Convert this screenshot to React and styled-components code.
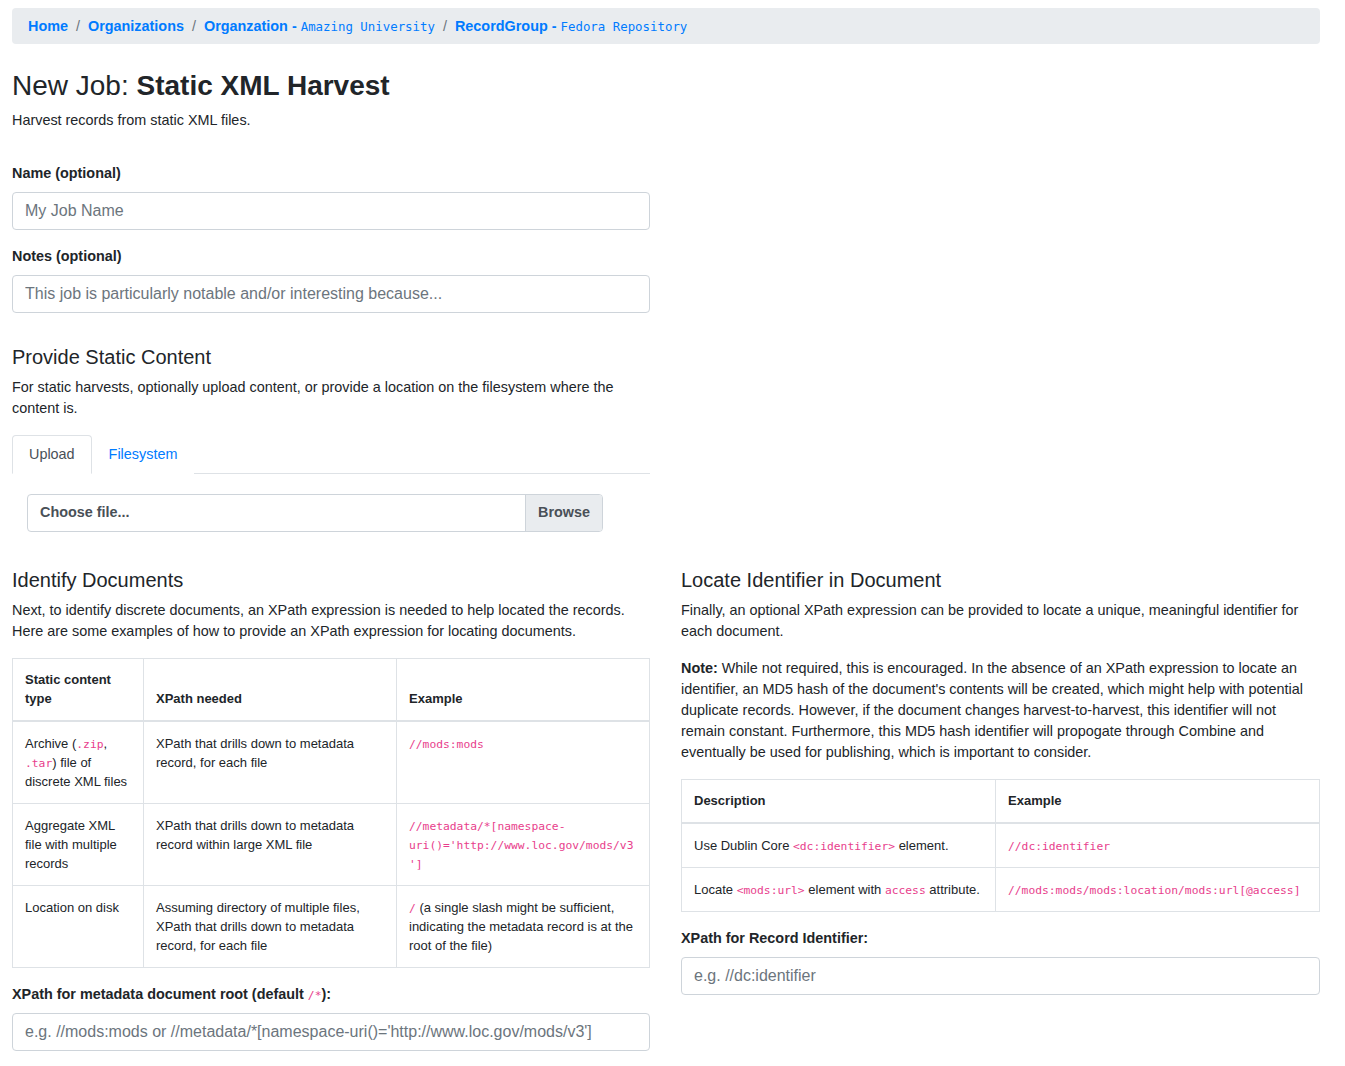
import React from 'react';
import styled, { createGlobalStyle } from 'styled-components';

const blue = '#007bff';
const pink = '#e83e8c';
const border = '#dee2e6';
const inputBorder = '#ced4da';
const muted = '#6c757d';

const GlobalStyle = createGlobalStyle`
    body {
        margin: 0;
        font-family: 'Liberation Sans', Helvetica, Arial, sans-serif;
        font-size: 14.4px;
        line-height: 21px;
        color: #212529;
        background: #fff;
    }
    * { box-sizing: border-box; }
`;

const Page = styled.div`
    padding: 8px 25px 24px 12px;
`;

const Crumbs = styled.ol`
    display: flex;
    align-items: center;
    list-style: none;
    margin: 0 0 25px;
    padding: 7.5px 16px;
    background: #e9ecef;
    border-radius: 4px;
    line-height: 21px;
`;

const Crumb = styled.li`
    display: flex;
    align-items: baseline;

    & + &::before {
        content: '/';
        color: ${muted};
        padding: 0 8px;
    }

    a {
        color: ${blue};
        font-weight: 700;
        text-decoration: none;
    }

    code {
        font-family: 'DejaVu Sans Mono', 'Liberation Mono', monospace;
        font-size: 12.4px;
        font-weight: 400;
        color: ${blue};
    }
`;

const Title = styled.h3`
    margin: 0 0 7px;
    font-size: 28px;
    font-weight: 400;
    line-height: 1.2;

    b { font-weight: 700; }
`;

const Lead = styled.p`
    margin: 0 0 ${p => p.$gap || 16}px;
`;

const Top = styled.section`
    width: 638px;
`;

const Group = styled.div`
    margin-bottom: 16px;
`;

const Label = styled.label`
    display: block;
    font-weight: 700;
    margin-bottom: 8px;
`;

const Input = styled.input`
    display: block;
    width: 100%;
    height: 38px;
    padding: 6px 12px;
    font-family: inherit;
    font-size: 16px;
    color: #495057;
    border: 1px solid ${inputBorder};
    border-radius: 4px;
    background: #fff;

    &::placeholder { color: ${muted}; }
`;

const Heading = styled.h4`
    margin: ${p => p.$top || 0}px 0 8px;
    font-size: 20px;
    font-weight: 400;
    line-height: 1.2;
`;

const Tabs = styled.ul`
    display: flex;
    list-style: none;
    margin: 0;
    padding: 0;
    border-bottom: 1px solid ${border};
`;

const Tab = styled.li`
    margin-bottom: -1px;
    padding: 8px 16px;
    border: 1px solid ${p => (p.$active ? border : 'transparent')};
    border-bottom-color: ${p => (p.$active ? '#fff' : 'transparent')};
    border-radius: 4px 4px 0 0;
    background: #fff;
    color: ${p => (p.$active ? '#495057' : blue)};
`;

const TabPane = styled.div`
    padding: 20px 15px 0;
`;

const FileBox = styled.div`
    display: flex;
    width: 576px;
    height: 38px;
    border: 1px solid ${inputBorder};
    border-radius: 4px;
    overflow: hidden;
    font-weight: 700;
    color: #495057;
`;

const FileName = styled.div`
    flex: 1;
    padding: 7px 12px;
`;

const FileButton = styled.div`
    padding: 7px 12px;
    background: #e9ecef;
    border-left: 1px solid ${inputBorder};
`;

const Columns = styled.div`
    display: grid;
    grid-template-columns: 638px 639px;
    column-gap: 31px;
    margin-top: 36px;
`;

const Code = styled.code`
    font-family: 'DejaVu Sans Mono', 'Liberation Mono', monospace;
    font-size: 11.3px;
    line-height: 1;
    font-weight: 400;
    color: ${pink};
    word-break: break-word;
`;

const Table = styled.table`
    width: 100%;
    margin-bottom: 16px;
    border-collapse: collapse;
    table-layout: fixed;
    font-size: 13px;
    line-height: 19px;

    th, td {
        padding: 12px;
        border: 1px solid ${border};
        text-align: left;
        vertical-align: top;
    }

    thead th {
        padding: 11.5px 12px;
        vertical-align: bottom;
        border-bottom-width: 2px;
        font-weight: 700;
    }
`;

const docRows = [
    {
        type: <>Archive (<Code>.zip</Code>, <Code>.tar</Code>) file of discrete XML files</>,
        xpath: 'XPath that drills down to metadata record, for each file',
        example: <Code>//mods:mods</Code>,
    },
    {
        type: 'Aggregate XML file with multiple records',
        xpath: 'XPath that drills down to metadata record within large XML file',
        example: <Code>//metadata/*[namespace-uri()='http://www.loc.gov/mods/v3']</Code>,
    },
    {
        type: 'Location on disk',
        xpath: 'Assuming directory of multiple files, XPath that drills down to metadata record, for each file',
        example: <><Code>/</Code> (a single slash might be sufficient, indicating the metadata record is at the root of the file)</>,
    },
];

const idRows = [
    {
        desc: <>Use Dublin Core <Code>&lt;dc:identifier&gt;</Code> element.</>,
        example: <Code>//dc:identifier</Code>,
    },
    {
        desc: <>Locate <Code>&lt;mods:url&gt;</Code> element with <Code>access</Code> attribute.</>,
        example: <Code>//mods:mods/mods:location/mods:url[@access]</Code>,
    },
];

const App = () => {
    return (
        <Page>
            <GlobalStyle />
            <nav>
                <Crumbs>
                    <Crumb><a href="#home">Home</a></Crumb>
                    <Crumb><a href="#orgs">Organizations</a></Crumb>
                    <Crumb><a href="#org">Organzation -&nbsp;<code>Amazing University</code></a></Crumb>
                    <Crumb><a href="#rg">RecordGroup -&nbsp;<code>Fedora Repository</code></a></Crumb>
                </Crumbs>
            </nav>

            <Top>
                <Title>New Job: <b>Static XML Harvest</b></Title>
                <Lead $gap={32}>Harvest records from static XML files.</Lead>

                <Group>
                    <Label>Name (optional)</Label>
                    <Input type="text" placeholder="My Job Name" />
                </Group>
                <Group>
                    <Label>Notes (optional)</Label>
                    <Input type="text" placeholder="This job is particularly notable and/or interesting because..." />
                </Group>

                <Heading $top={32}>Provide Static Content</Heading>
                <Lead>For static harvests, optionally upload content, or provide a location on the filesystem where the content is.</Lead>

                <Tabs>
                    <Tab $active>Upload</Tab>
                    <Tab>Filesystem</Tab>
                </Tabs>
                <TabPane>
                    <FileBox>
                        <FileName>Choose file...</FileName>
                        <FileButton>Browse</FileButton>
                    </FileBox>
                </TabPane>
            </Top>

            <Columns>
                <div>
                    <Heading>Identify Documents</Heading>
                    <Lead>Next, to identify discrete documents, an XPath expression is needed to help located the records. Here are some examples of how to provide an XPath expression for locating documents.</Lead>
                    <Table>
                        <colgroup>
                            <col style={{ width: '131px' }} />
                            <col style={{ width: '253px' }} />
                            <col />
                        </colgroup>
                        <thead>
                            <tr>
                                <th>Static content type</th>
                                <th>XPath needed</th>
                                <th>Example</th>
                            </tr>
                        </thead>
                        <tbody>
                            {docRows.map((row, i) => (
                                <tr key={i}>
                                    <td>{row.type}</td>
                                    <td>{row.xpath}</td>
                                    <td>{row.example}</td>
                                </tr>
                            ))}
                        </tbody>
                    </Table>
                    <Group>
                        <Label>XPath for metadata document root (default <Code>/*</Code>):</Label>
                        <Input type="text" placeholder="e.g. //mods:mods or //metadata/*[namespace-uri()='http://www.loc.gov/mods/v3']" />
                    </Group>
                </div>

                <div>
                    <Heading>Locate Identifier in Document</Heading>
                    <Lead>Finally, an optional XPath expression can be provided to locate a unique, meaningful identifier for each document.</Lead>
                    <Lead><b>Note:</b> While not required, this is encouraged. In the absence of an XPath expression to locate an identifier, an MD5 hash of the document's contents will be created, which might help with potential duplicate records. However, if the document changes harvest-to-harvest, this identifier will not remain constant. Furthermore, this MD5 hash identifier will propogate through Combine and eventually be used for publishing, which is important to consider.</Lead>
                    <Table>
                        <colgroup>
                            <col style={{ width: '314px' }} />
                            <col />
                        </colgroup>
                        <thead>
                            <tr>
                                <th>Description</th>
                                <th>Example</th>
                            </tr>
                        </thead>
                        <tbody>
                            {idRows.map((row, i) => (
                                <tr key={i}>
                                    <td>{row.desc}</td>
                                    <td>{row.example}</td>
                                </tr>
                            ))}
                        </tbody>
                    </Table>
                    <Group>
                        <Label>XPath for Record Identifier:</Label>
                        <Input type="text" placeholder="e.g. //dc:identifier" />
                    </Group>
                </div>
            </Columns>
        </Page>
    );
};

export default App;
